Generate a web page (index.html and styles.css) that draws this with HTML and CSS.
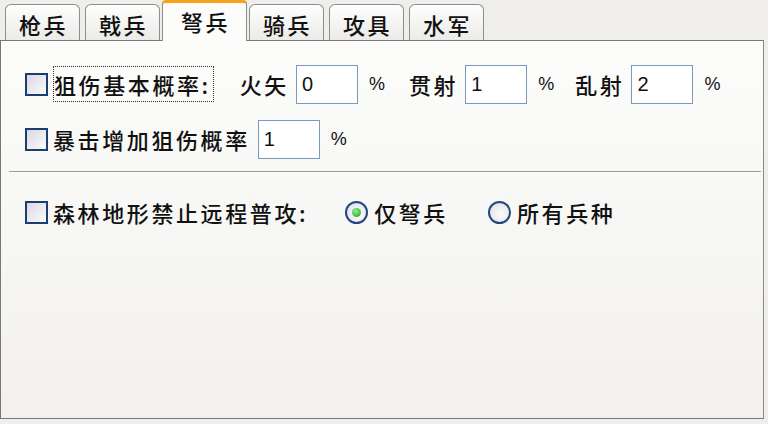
FILE: index.html
```html
<!DOCTYPE html>
<html lang="zh">
<head>
<meta charset="utf-8">
<link rel="stylesheet" href="styles.css">
</head>
<body>
<div class="tabs">
  <div class="tab">枪兵</div>
  <div class="tab">戟兵</div>
  <div class="tab active">弩兵</div>
  <div class="tab">骑兵</div>
  <div class="tab">攻具</div>
  <div class="tab">水军</div>
</div>
<div class="panel">
  <div class="row">
    <span class="cb"></span>
    <span class="txt focus">狙伤基本概率:</span>
    <span class="txt lbl first">火矢</span>
    <input class="num" value="0" readonly>
    <span class="pct">%</span>
    <span class="txt lbl">贯射</span>
    <input class="num" value="1" readonly>
    <span class="pct">%</span>
    <span class="txt lbl last">乱射</span>
    <input class="num" value="2" readonly>
    <span class="pct">%</span>
  </div>
  <div class="row row2">
    <span class="cb"></span>
    <span class="txt">暴击增加狙伤概率</span>
    <input class="num num-near" value="1" readonly>
    <span class="pct">%</span>
  </div>
  <div class="sep"></div>
  <div class="row row3">
    <span class="cb"></span>
    <span class="txt">森林地形禁止远程普攻:</span>
    <span class="radio checked first-radio"><span class="dot"></span></span>
    <span class="txt">仅弩兵</span>
    <span class="radio second-radio"></span>
    <span class="txt">所有兵种</span>
  </div>
</div>
</body>
</html>
```

FILE: styles.css
```css
html, body {
  margin: 0;
  padding: 0;
}
body {
  width: 768px;
  height: 424px;
  overflow: hidden;
  background: #efeeeb;
  font-family: "Noto Sans CJK SC", "Noto Sans", sans-serif;
  color: #111;
}
.tabs {
  display: flex;
  align-items: flex-end;
  height: 41px;
  padding-left: 5px;
}
.tab {
  box-sizing: border-box;
  width: 75px;
  height: 37px;
  margin-right: 5px;
  border: 1px solid #8e8e8e;
  border-bottom: none;
  border-radius: 6px 6px 0 0;
  background: linear-gradient(#fefefe, #ebeae7);
  font-size: 22px;
  font-weight: 500;
  line-height: 38px;
  letter-spacing: 2.5px;
  text-indent: 2px;
  text-align: center;
}
.tab.active {
  position: relative;
  z-index: 2;
  width: 85px;
  height: 41px;
  margin: 0 2px 0 -3px;
  border-top: 3px solid #f5a21c;
  border-radius: 4px 4px 0 0;
  background: #fcfcfb;
  line-height: 36px;
}
.panel {
  position: relative;
  z-index: 1;
  box-sizing: border-box;
  width: 764px;
  height: 379px;
  margin-top: -1px;
  border: 1px solid #777;
  border-right-color: #8a8a8a;
  background: linear-gradient(#fcfcfb, #f2f1ef);
  padding: 23px 0 0 24px;
}
.row {
  display: flex;
  align-items: center;
  height: 40px;
}
.row2 {
  margin-top: 15px;
}
.row3 {
  margin-top: 19px;
}
.cb {
  box-sizing: border-box;
  width: 23px;
  height: 23px;
  margin-right: 5px;
  border: 2px solid #1e3c6e;
  background: linear-gradient(135deg, #d9d8e2, #fbfbfb);
  flex: none;
}
.txt {
  font-size: 22px;
  font-weight: 500;
  letter-spacing: 2.6px;
  white-space: nowrap;
}
.focus {
  padding: 1px 2px 1px 0;
  border: 1px dotted #333;
}
.lbl {
  margin-left: 24px;
}
.lbl.first {
  margin-left: 26px;
}
.lbl.last {
  margin-left: 21px;
}
.num {
  box-sizing: border-box;
  width: 62px;
  height: 39px;
  margin-left: 7px;
  padding: 0 0 0 5px;
  border: 1px solid #7b98bd;
  background: #fff;
  font-family: "Liberation Sans", Arial, sans-serif;
  font-size: 20px;
  color: #111;
  outline: none;
}
.num-near {
  margin-left: 8px;
}
.pct {
  margin-left: 11px;
  font-family: "Liberation Sans", sans-serif;
  font-size: 18px;
}
.sep {
  height: 1px;
  margin: 12px 0 0 -16px;
  width: 752px;
  background: #a3968a;
  border-bottom: 1px solid #fff;
}
.radio {
  box-sizing: border-box;
  width: 23px;
  height: 23px;
  margin-right: 6px;
  border: 2px solid #22467f;
  border-radius: 50%;
  background: radial-gradient(circle at 60% 60%, #fdfdfd, #dcdce5);
  display: flex;
  align-items: center;
  justify-content: center;
  flex: none;
}
.first-radio {
  margin-left: 37px;
}
.second-radio {
  margin-left: 40px;
}
.dot {
  width: 9px;
  height: 9px;
  border-radius: 50%;
  background: radial-gradient(circle at 40% 35%, #8ef08e, #1c9a1c);
}
```
